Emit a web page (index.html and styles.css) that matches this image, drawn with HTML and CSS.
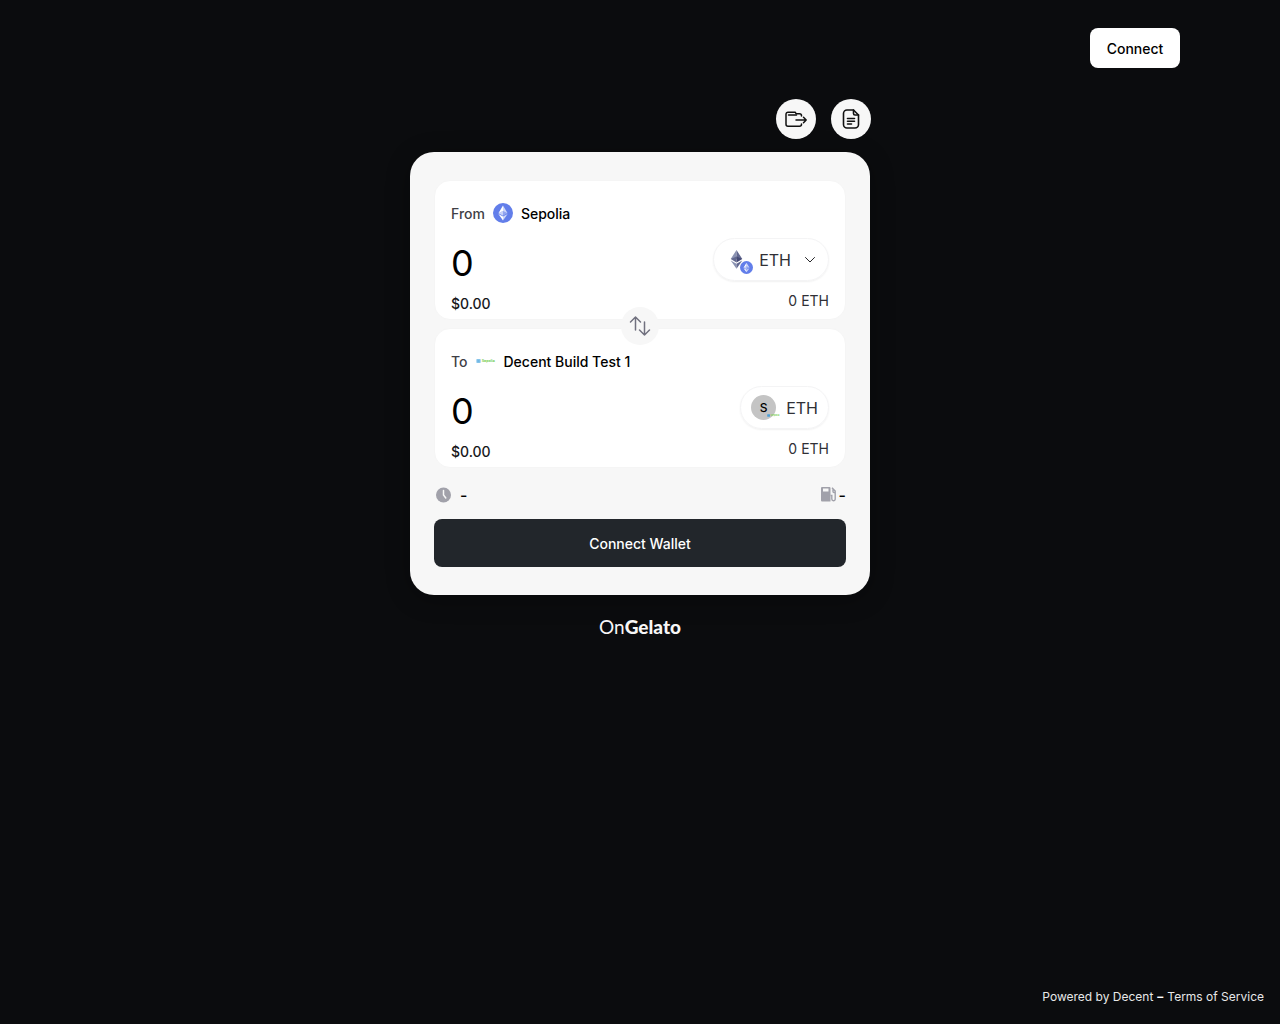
FILE: index.html
```html
<!DOCTYPE html>
<html lang="en">
<head>
  <meta charset="UTF-8" />
  <meta name="viewport" content="width=device-width, initial-scale=1" />
  <title>Bridge | OnGelato</title>
  <link rel="stylesheet" href="styles.css">
</head>
<body>
  <svg class="defs" aria-hidden="true">
    <symbol id="eth-badge" viewBox="0 0 20 20">
      <circle cx="10" cy="10" r="10" fill="#627eea" />
      <path d="M10 2.6v5.5l4.6 2.1z" fill="#fff" fill-opacity=".7" />
      <path d="M10 2.6L5.4 10.2 10 8.1z" fill="#fff" />
      <path d="M10 13.6v3.8l4.6-6.4z" fill="#fff" fill-opacity=".7" />
      <path d="M10 17.4v-3.8L5.4 11z" fill="#fff" />
      <path d="M10 12.8l4.6-2.6L10 8.1z" fill="#fff" fill-opacity=".3" />
      <path d="M5.4 10.2l4.6 2.6V8.1z" fill="#fff" fill-opacity=".65" />
    </symbol>
  </svg>

  <header>
    <button type="button" class="btn-connect">Connect</button>
  </header>

  <main>
    <div class="actions">
      <button type="button" class="btn-round" aria-label="Transfer">
        <svg width="24" height="24" viewBox="0 0 24 24" fill="none" stroke="#111" stroke-width="1.5" stroke-linecap="round" stroke-linejoin="round">
          <path d="M17.500 9V8.800a2 2 0 0 0-2-2h-3.300l-1-1.600H4A2 2 0 0 0 2 7.200v10a2 2 0 0 0 2 2h11.500a2 2 0 0 0 2-2V17" />
          <path d="M4.500 8h8M12 13h10.200M19.500 10.300l2.700 2.700-2.700 2.700" />
        </svg>
      </button>
      <button type="button" class="btn-round" aria-label="History">
        <svg width="24" height="24" viewBox="0 0 24 24" fill="none" stroke="#111" stroke-width="1.6" stroke-linecap="round" stroke-linejoin="round">
          <path d="M14.500 3H8a3.500 3.500 0 0 0-3.500 3.500v11A3.500 3.500 0 0 0 8 21h8a3.500 3.500 0 0 0 3.500-3.500V8z" />
          <path d="M14.500 3v3.500A1.500 1.500 0 0 0 16 8h3.500M8.500 11.500h7M8.500 14.200h7M8.500 17h4" />
        </svg>
      </button>
    </div>

    <form class="card">
      <section class="panel">
        <div class="chain">
          <label for="fromAmount">From</label>
          <svg width="20" height="20"><use href="#eth-badge" /></svg>
          <strong>Sepolia</strong>
        </div>
        <div class="panel-body">
          <div class="amount">
            <input type="text" id="fromAmount" value="0" inputmode="decimal" />
            <p>$0.00</p>
          </div>
          <div class="token">
            <button type="button" class="token-pill">
              <span class="token-icon">
                <svg width="25" height="25" viewBox="0 0 26 26">
                  <path d="M13 3v9.500H7z" fill="#8a92b2" />
                  <path d="M13 3v9.500h6z" fill="#62688f" />
                  <path d="M7 12.500l6-2.700V16z" fill="#62688f" />
                  <path d="M19 12.500l-6-2.700V16z" fill="#454a75" />
                  <path d="M7 14l6 8.500v-5z" fill="#8a92b2" />
                  <path d="M19 14l-6 8.500v-5z" fill="#62688f" />
                </svg>
                <svg class="token-chain" width="13" height="13"><use href="#eth-badge" /></svg>
              </span>
              <span>ETH</span>
              <svg class="chevron" width="14" height="12" viewBox="0 0 14 12" fill="none" stroke="#27272a" stroke-linecap="round" stroke-linejoin="round">
                <path d="M1.500 3.500L6 8l4.500-4.500" />
              </svg>
            </button>
            <p>0 ETH</p>
          </div>
        </div>
      </section>

      <button type="button" class="btn-swap" aria-label="Swap direction">
        <svg width="24" height="24" viewBox="0 0 24 24" fill="none" stroke="#71717f" stroke-width="1.5" stroke-linecap="round" stroke-linejoin="round">
          <path d="M7.500 16V3M2.500 8l5-5 5 5M16.500 8v13M11.500 16l5 5 5-5" />
        </svg>
      </button>

      <section class="panel">
        <div class="chain">
          <label for="toAmount">To</label>
          <svg width="20" height="4" viewBox="0 0 60 12">
            <rect x="1" y="0" width="13" height="12" rx="2" fill="#8cc8ec" />
            <path d="M4 4h7M4 8h7" stroke="#4a9fd8" stroke-width="1.5" />
            <text x="17" y="10" class="chain-name">Sepolia</text>
          </svg>
          <strong>Decent Build Test 1</strong>
        </div>
        <div class="panel-body">
          <div class="amount">
            <input type="text" id="toAmount" value="0" inputmode="decimal" />
            <p>$0.00</p>
          </div>
          <div class="token">
            <button type="button" class="token-pill">
              <span class="token-icon">
                <span class="token-letter">S</span>
                <svg class="token-chain small" width="13" height="3" viewBox="0 0 60 12">
                  <rect x="1" y="0" width="13" height="12" rx="2" fill="#4a9fd8" />
                  <text x="17" y="10" class="chain-name">Sepolia</text>
                </svg>
              </span>
              <span>ETH</span>
            </button>
            <p>0 ETH</p>
          </div>
        </div>
      </section>

      <div class="stats">
        <span class="stat-time">
          <svg width="19" height="20" viewBox="0 0 19 20">
            <circle cx="9.500" cy="10" r="7.500" fill="#a1a1aa" />
            <path d="M9.500 5.500V10l2.300 3" fill="none" stroke="#f7f7f7" stroke-width="1.5" stroke-linecap="round" />
          </svg>
          -
        </span>
        <span class="stat-gas">
          <svg width="16" height="18" viewBox="0 0 16 18">
            <path d="M2 1h6.500a1 1 0 0 1 1 1v13.500H1a1 1 0 0 1-1-1V2a1 1 0 0 1 1-1z" fill="#a1a1aa" />
            <path d="M2 2.500h5.500v3H2z" fill="#f7f7f7" />
            <path d="M9.500 9.500h1.300V13a1.700 1.700 0 0 0 3.400 0V5L11 1.800M12 3v2.500a1 1 0 0 0 1 1h1.200" fill="none" stroke="#a1a1aa" stroke-width="1.4" />
          </svg>
          -
        </span>
      </div>

      <button type="button" class="btn-wallet">Connect Wallet</button>
    </form>

    <p class="brand">On<b>Gelato</b></p>
  </main>

  <footer>
    <a href="#decent">Powered by Decent</a>
    <b>–</b>
    <a href="#terms">Terms of Service</a>
  </footer>
</body>
</html>
```
FILE: styles.css
```css
* { margin: 0; padding: 0; box-sizing: border-box; }

body {
  min-height: 100vh;
  display: flex;
  flex-direction: column;
  background: #0b0c0e;
  font-family: 'Inter', sans-serif;
  font-size: 14px;
  line-height: 20px;
  color: #000;
}

button, input {
  font: inherit;
  color: inherit;
  border: none;
  background: none;
}

button { cursor: pointer; }

svg {
  display: block;
  flex-shrink: 0;
}

.defs {
  position: absolute;
  width: 0;
  height: 0;
}

header {
  display: flex;
  justify-content: flex-end;
  padding: 28px 100px 0;
}

.btn-connect {
  height: 40px;
  width: 90px;
  padding-top: 2px;
  background: #fff;
  border-radius: 8px;
  font-weight: 500;
}

main {
  flex-grow: 1;
  width: 100%;
  max-width: 460px;
  margin: 31px auto 0;
}

.actions {
  display: flex;
  justify-content: flex-end;
  gap: 15px;
  margin: 0 -1px 13px 0;
}

.btn-round {
  width: 40px;
  height: 40px;
  display: flex;
  align-items: center;
  justify-content: center;
  background: #f7f7f7;
  border-radius: 50%;
}

.card {
  background: #f7f7f7;
  border-radius: 24px;
  padding: 28px 24px;
  box-shadow: 0 4px 24px rgba(0, 0, 0, 0.3);
}

.panel {
  background: #fff;
  border: 1px solid #f5f5f5;
  border-radius: 16px;
  padding: 20px 16px 5px;
}

.chain {
  display: flex;
  align-items: center;
  gap: 8px;
  height: 24px;
  margin-bottom: 13px;
}

.chain label, .chain strong {
  padding-top: 2px;
  font-weight: 500;
}

.chain label { color: #3f3f46; }

.chain-name {
  font-size: 11px;
  font-weight: 700;
  fill: #7ccf5b;
}

.panel-body {
  display: flex;
  justify-content: space-between;
}

.amount {
  flex: 1;
  min-width: 0;
}

.amount input {
  display: block;
  width: 100%;
  height: 50px;
  margin-bottom: 6px;
  font-size: 36px;
  outline: none;
}

.amount p {
  font-weight: 500;
  color: #18181b;
}

.token {
  display: flex;
  flex-direction: column;
  align-items: flex-end;
  gap: 10px;
  color: #303036;
}

.token-pill {
  display: flex;
  align-items: center;
  gap: 10px;
  height: 43px;
  padding: 0 10px;
  border: 1px solid #f4f4f5;
  border-radius: 22px;
  box-shadow: 0 1px 2px rgba(0, 0, 0, 0.06);
  font-size: 16px;
}

.token-icon { position: relative; }

.token-letter {
  display: block;
  width: 25px;
  height: 25px;
  line-height: 26px;
  border-radius: 50%;
  background: #c4c4c4;
  color: #000;
  font-size: 12px;
  font-weight: 500;
}

.token-chain {
  position: absolute;
  right: -4px;
  bottom: -2px;
}

.token-chain.small { bottom: 3px; }

.chevron { margin-left: 3px; }

/* overlaps both panels, leaving 8px between them */
.btn-swap {
  position: relative;
  z-index: 1;
  display: flex;
  align-items: center;
  justify-content: center;
  width: 38px;
  height: 38px;
  margin: -13px auto -17px;
  background: #f7f7f7;
  border-radius: 50%;
}

.stats {
  display: flex;
  justify-content: space-between;
  align-items: center;
  height: 24px;
  margin: 15px 0 12px;
  font-size: 16px;
  font-weight: 500;
}

.stats span {
  display: flex;
  align-items: center;
}

.stat-time { gap: 7px; }
.stat-gas { gap: 2px; }

.btn-wallet {
  display: block;
  width: 100%;
  height: 48px;
  padding-top: 2px;
  background: #22262b;
  border-radius: 8px;
  color: #fff;
  font-weight: 500;
}

.brand {
  margin-top: 20px;
  text-align: center;
  font-family: 'Lato', sans-serif;
  font-size: 19px;
  line-height: 24px;
  color: #f7f7f7;
}

.brand b { font-weight: 900; }

footer {
  display: flex;
  justify-content: flex-end;
  gap: 4px;
  padding: 16px 16px 15px;
  font-size: 12px;
  line-height: 24px;
  color: #fff;
}

footer a {
  color: #e8e8e8;
  text-decoration: none;
}
```
